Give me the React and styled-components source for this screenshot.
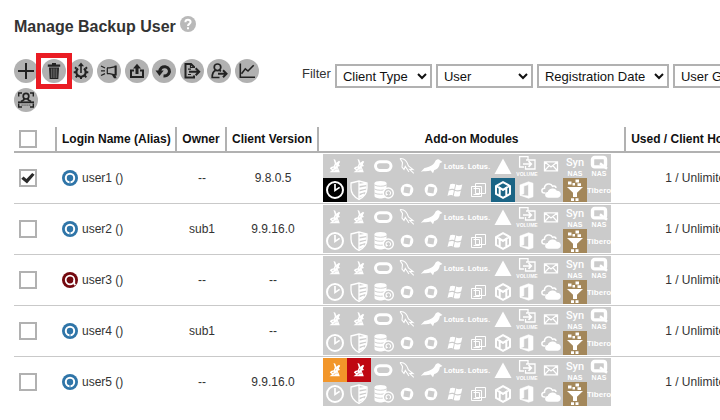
import React, { Fragment, useState } from "react";
import styled, { createGlobalStyle } from "styled-components";

const GlobalStyle = createGlobalStyle`
  * { box-sizing: border-box; }
  body {
    margin: 0;
    background: #fff;
    color: #333;
    font-family: "Liberation Sans", Arial, sans-serif;
    font-size: 12px;
  }
`;

const Page = styled.main`
  padding: 16px 0 0 14px;
  overflow: hidden;
`;

const TitleBar = styled.header`
  display: flex;
  gap: 4px;
  height: 22px;
`;

const Title = styled.h1`
  margin: 0;
  font-size: 16px;
  line-height: 22px;
  color: #333;
`;

const HelpLink = styled.a`
  width: 16px;
  height: 16px;
  svg { display: block; }
`;

const Controls = styled.section`
  display: flex;
  gap: 24px;
  margin-top: 21px;
`;

const Toolbar = styled.div`
  flex: 0 0 264px;
  font-size: 13px;
  line-height: 29px;
`;

const ToolButton = styled.button`
  position: relative;
  display: inline-block;
  vertical-align: top;
  width: 24px;
  height: 24px;
  padding: 0;
  border: 0;
  border-radius: 50%;
  background: #b1b1b1;
  color: #222;
  line-height: 0;
  z-index: ${(p) => (p.$marked ? 1 : 0)};
  &::after {
    content: "";
    display: ${(p) => (p.$marked ? "block" : "none")};
    position: absolute;
    inset: -6px;
    border: 5px solid #ea1c24;
  }
`;

const Filters = styled.div`
  display: flex;
  align-items: flex-start;
  gap: 4px;
  padding-top: 5px;
  font-size: 13px;
`;

const FilterLabel = styled.span`
  line-height: 20px;
`;

const Select = styled.select`
  flex: none;
  width: ${(p) => p.$width}px;
  height: 24px;
  padding: 0 2px;
  border: 2px solid #b1b1b1;
  border-radius: 0;
  background-color: #fff;
  color: #111;
  font: 13px "Liberation Sans", Arial, sans-serif;
`;

const Table = styled.table`
  table-layout: fixed;
  width: 100%;
  min-width: 763px;
  margin-top: 10px;
  border-collapse: separate;
  border-spacing: 0;
`;

const Col = styled.col`
  width: ${(p) => (p.$width ? `${p.$width}px` : "auto")};
`;

const HeadCell = styled.th`
  height: 26px;
  padding: 0 0 0 ${(p) => (p.$left ? 5 : 0)}px;
  border-bottom: 2px solid #b1b1b1;
  border-right: 2px solid #b1b1b1;
  color: #111;
  text-align: ${(p) => (p.$left ? "left" : "center")};
  white-space: nowrap;
  &:last-child { border-right: 0; }
`;

const Row = styled.tr`
  &:last-child td { border-bottom-color: transparent; }
`;

const Cell = styled.td`
  height: 51px;
  padding: 1px 0 1px ${(p) => p.$indent || 0}px;
  border-bottom: 1px solid #c9c9c9;
  text-align: ${(p) => (p.$indent ? "left" : "center")};
  white-space: nowrap;
  &:last-child { padding-right: 6px; }
`;

const Tick = styled.input`
  appearance: none;
  display: block;
  width: 18px;
  height: 18px;
  margin: 0 0 0 5px;
  border: 2px solid #b1b1b1;
  background: #fff;
  &:checked::before {
    content: "";
    display: block;
    width: 14px;
    height: 14px;
    background: #2b2b2b;
    clip-path: polygon(2% 56%, 18% 40%, 39% 58%, 80% 14%, 97% 27%, 43% 90%);
  }
`;

const UserLink = styled.a`
  display: flex;
  align-items: center;
  gap: 4px;
  color: inherit;
  text-decoration: none;
`;

const Modules = styled.div`
  display: grid;
  grid-template-columns: repeat(12, 24px);
  grid-auto-rows: 24px;
`;

const Module = styled.span`
  --tile: ${(p) => p.$color || "#cbcbcb"};
  background: var(--tile);
  color: #fff;
  line-height: 0;
`;

const Icon = ({ children, size = 24, width = 2 }) => (
  <svg
    width={size}
    height={size}
    viewBox={`0 0 ${size} ${size}`}
    fill="none"
    stroke="currentColor"
    strokeWidth={width}
    aria-hidden="true"
  >
    {children}
  </svg>
);

const WordText = styled.text`
  font-family: ${(p) => p.$face || '"Liberation Sans"'}, Arial, sans-serif;
  font-size: ${(p) => p.$size}px;
  font-weight: ${(p) => p.$weight || 700};
  text-anchor: middle;
  fill: currentColor;
  stroke: none;
`;

const Word = ({ y, size, weight, face, children }) => (
  <WordText x="12" y={y} $size={size} $weight={weight} $face={face}>
    {children}
  </WordText>
);

const tools = [
  ["Add", <Icon width={2}><path d="M4 12H20M12 4V20" /></Icon>],
  [
    "Delete",
    <Icon width={1}>
      <path d="M5.8 5.5H18.2V7.7H5.8zM10 4H14V5.5H10z" fill="currentColor" stroke="none" />
      <path d="M7 8.5H17L16.3 20H7.7z" fill="currentColor" stroke="none" />
      <path d="M9.4 9.5V19M11.2 9.5V19M12.9 9.5V19M14.7 9.5V19" stroke="#b1b1b1" strokeWidth=".5" />
    </Icon>,
  ],
  [
    "Update settings",
    <Icon width={2}>
      <path d="M9 9.5A4.7 4.7 0 1 0 15 9.5" strokeWidth="2.2" />
      <path d="M7.5 9.7L6 8.2M7 13.2H4.7M8.3 16.5L6.7 18.3M12 17.8V20M15.7 16.5L17.3 18.3M17 13.2H19.3M16.5 9.7L18 8.2" />
      <path d="M12 14V6" strokeWidth="1.6" />
      <path d="M9 7.3L12 3.5L15 7.3z" fill="currentColor" stroke="none" />
    </Icon>,
  ],
  [
    "Broadcast",
    <Icon width={1.2}>
      <path d="M4 7L8 9M4 11.8H8M4 16.5L8 14.6" />
      <path d="M10.3 9V14.7M10 8.8H12.5L18.5 7.6M10 14.7H12.5L18 15.8" />
      <path d="M17.6 6.5H19.7V16.5H17.6z" fill="currentColor" stroke="none" />
      <path d="M14.5 15.2H18L19.6 19.2H17z" fill="currentColor" stroke="none" />
    </Icon>,
  ],
  [
    "Upload",
    <Icon width={2}>
      <path d="M9 11.5H6V18H18V11.5H15" />
      <path d="M12 15V8" strokeWidth="3" />
      <path d="M8 9.5L12 4.8L16 9.5z" fill="currentColor" stroke="none" />
    </Icon>,
  ],
  [
    "Restore",
    <Icon width={3}>
      <path d="M7.7 12.8C8 9 10.5 7.3 13.3 7.7C17 8.2 18.5 12 16.6 14.8C15.6 16.4 13.8 17.2 11.5 17.1" />
      <path d="M3.5 11.5H11.7L7.5 17z" fill="currentColor" stroke="none" />
    </Icon>,
  ],
  [
    "Export file",
    <Icon width={2}>
      <path d="M14 9V8L11 5H5.5V18.5H14V16.5" />
      <path d="M10.5 5V8.5H14M8 10.2H11M8 15.5H11" strokeWidth="1.2" />
      <path d="M9 12.8H19M15.7 9.3L19.2 12.8L15.7 16.3" />
    </Icon>,
  ],
  [
    "Move user",
    <Icon width={1.7}>
      <circle cx="10.5" cy="8.3" r="3.3" />
      <path d="M8.5 11.4C6.5 12.3 5.2 14.5 5.2 18.5H12.5M12.2 11.3L14 12.2" />
      <path d="M11 14.7H19.3M16 11.2L19.5 14.7L16 18.2" strokeWidth="2" />
    </Icon>,
  ],
  [
    "Report",
    <Icon width={1.6}>
      <path d="M5.3 4.5V18.3H20" />
      <path d="M6.5 14.7L10.3 9.8L13 12L18.7 6.2" />
    </Icon>,
  ],
  [
    "Identify user",
    <Icon width={1.4}>
      <path d="M4.7 8.5V5H8M16 5H19.3V8.5M4.7 15.5V19H8M16 19H19.3V15.5" />
      <circle cx="12" cy="8.2" r="2.8" strokeWidth="1.7" />
      <path d="M10.2 10.3L9.7 12L7 13.6M13.8 10.3L14.3 12L17 13.6" strokeWidth="1.7" />
      <path d="M4 14.3H20" strokeWidth="1.8" />
      <path d="M7.5 17.2H16.5" strokeWidth="1.7" strokeDasharray="1.3 .6" stroke="#777" />
    </Icon>,
  ],
];

const rabbit = (
  <Icon width={1.7}>
    <path
      d="M10.5 5L12.3 5.8L13.3 8.8L16 6.8L17.2 7.8L15.8 10.3L17 12L14.6 12.8L16 16L16.8 18.3H6.5L9 16.3L6.8 14.5L8 13L10.7 12.2L11.8 9.5z"
      fill="currentColor"
      stroke="none"
    />
    <path d="M9 14.7L11 14M12 12.2L13.3 11.4M10.6 16.7L12.6 15.6M14 14.6V15.9" stroke="var(--tile)" strokeOpacity=".6" strokeWidth="1" />
  </Icon>
);

const chip = (
  <Icon>
    <circle cx="12" cy="12" r="6.3" fill="currentColor" stroke="none" />
    <path d="M9.4 8.4L15.6 9.5L14.5 15.6L8.4 14.5z" fill="var(--tile)" stroke="none" />
  </Icon>
);

const lotus = <Icon><Word y={15} size={8} face="Roboto">Lotus.</Word></Icon>;

const moduleIcons = [
  rabbit,
  rabbit,
  <Icon width={3}><rect x="4.5" y="7.8" width="15.5" height="8.6" rx="4.3" /></Icon>,
  <Icon width={1.1}>
    <path d="M5 4.5C9 4 12 7 13.5 12L18 15.5L14.7 15.3L18.8 19.3M5 4.5L7.5 8.5L7 13L9 15.5L10.3 12.5L14 18" />
  </Icon>,
  <Icon width={1}>
    <path
      d="M1.8 17.7L5.5 14C9 13.5 14.5 11.5 16 7.8C16.8 5.2 19.5 4.5 21 6.3L23.5 8L20.8 9.2C20.3 13.5 18 15.2 15.3 16L14 19.3L11.7 16.5C8.5 17.7 5 16.7 1.8 17.7z"
      fill="currentColor"
      stroke="none"
    />
  </Icon>,
  lotus,
  lotus,
  <Icon><path d="M12 4.5L20.5 20H3.5z" fill="currentColor" stroke="none" /></Icon>,
  <Icon width={1.3}>
    <path d="M9 13H4.6V2.6H13V6M10.5 12V15H20V6H11" />
    <path d="M8 10H16M13.5 7.2L16.3 10L13.5 12.8" strokeWidth="1.7" />
    <Word y={22} size={5}>VOLUME</Word>
  </Icon>,
  <Icon width={1.3}>
    <path d="M5.5 7.8H18.5V16.8H5.5zM5.5 7.8L12 13L18.5 7.8M5.5 16.8L10.2 11.6M18.5 16.8L13.8 11.6" />
  </Icon>,
  <Icon>
    <Word y={12} size={11} weight={500} face="Roboto">Syn</Word>
    <Word y={22} size={7}>NAS</Word>
  </Icon>,
  <Icon width={3.4}>
    <rect x="5.5" y="3.5" width="13" height="9.4" rx="2.2" />
    <path d="M13 9.3L20 14.8" strokeWidth="2.4" />
    <Word y={22} size={7}>NAS</Word>
  </Icon>,
  <Icon width={2}>
    <circle cx="12" cy="12" r="8" />
    <path d="M12 6V12.4L16.6 9.4" strokeWidth="1.7" />
  </Icon>,
  <Icon width={1.3}>
    <path d="M4 5L12 3L20 5V10C20 16 17 19 12 21.5C7 19 4 16 4 10z" />
    <path d="M12 6.8L19.5 5.8M12 10.8L19.5 9.4M12 14.8L19 12.8M12 19L17 16.5" strokeWidth="2.2" />
    <path d="M12 3V21.5" />
  </Icon>,
  <Icon width={1.4}>
    <path d="M3.5 5V18C3.5 21.3 15.5 21.3 15.5 18V5" fill="currentColor" stroke="none" />
    <ellipse cx="9.5" cy="5" rx="6" ry="2" fill="currentColor" stroke="none" />
    <path d="M3.5 7C6 8.7 13 8.7 15.5 7M3.5 11C6 12.7 13 12.7 15.5 11M3.5 15C6 16.7 13 16.7 15.5 15" stroke="var(--tile)" strokeWidth=".9" />
    <circle cx="17.3" cy="15" r="5" fill="var(--tile)" />
    <path d="M15.6 16.6A2.3 2.3 0 1 1 18.5 17" strokeWidth="1.1" />
    <path d="M14.6 17.8L15 14.9L17.3 16.8z" fill="currentColor" stroke="none" />
  </Icon>,
  chip,
  chip,
  <Icon>
    <path
      d="M7.2 6.3C9 5.4 10.6 5.6 12.3 6.3L11.2 11.3C9.4 10.6 7.8 10.7 6 11.6zM13.2 6.6C15.2 7.5 17.2 7.4 19.3 6.4L18.1 11.6C16 12.6 14 12.5 12 11.7zM5.8 12.6C7.5 11.8 9.2 11.7 11 12.4L9.8 17.5C8 16.8 6.3 17 4.5 17.9zM11.8 12.8C13.7 13.6 15.8 13.7 17.8 12.7L16.7 17.9C14.8 18.8 12.8 18.7 10.7 17.9z"
      fill="currentColor"
      stroke="none"
    />
  </Icon>,
  <Icon width={1}>
    <path d="M4.5 8.5H14.5V18.5H4.5zM8.5 5.5H18.5V15.5H8.5zM6.5 10.5H12.5V16.5H6.5" />
  </Icon>,
  <Icon width={2}>
    <path d="M12 4.2L19 8V16L12 19.8L5 16V8z" />
    <path d="M8.7 17.5V9.8L12 11.8L15.3 9.8V17.5" />
    <path d="M5 8L12 11.8L19 8" strokeWidth="1.5" />
  </Icon>,
  <Icon>
    <path
      d="M5 7L13.5 3.8L18 5.2V18.8L13.5 20.2L5 17.2L13.5 18V6.6L8.8 8V15.7L5 17.2z"
      fill="currentColor"
      stroke="currentColor"
      strokeWidth=".6"
    />
  </Icon>,
  <Icon width={1.5}>
    <path d="M6.5 15H5.5C2 15 2 10.5 5.5 10.3C5.5 5.5 12 4.5 13.5 8.3C15.5 7.4 17 8.5 17 10" />
    <path d="M9.5 19C6 19 6 14.6 9.5 14.4C10 10.5 16 10 17.2 13.5C21.8 13 22.2 18.6 18.6 19z" fill="currentColor" />
  </Icon>,
  <Icon>
    <path d="M4 9H20L14 14.8V19H10V14.8z" fill="currentColor" stroke="none" />
    <path
      d="M5 3.5H8.5V6.5H5zM9.5 5H12V7.5H9.5zM12.5 1.5H16V4.5H12.5zM14.5 5.3H18V8H14.5zM8 20.3H11V23H8zM12.5 20.3H15.5V23H12.5z"
      fill="currentColor"
      stroke="none"
    />
  </Icon>,
  <Icon><Word y={15} size={8}>Tibero</Word></Icon>,
];

const moduleNames = [
  "Exchange database", "Exchange mail", "Oracle", "MySQL", "MariaDB", "Lotus Domino", "Lotus Notes",
  "Triangle", "Volume", "Mail", "Synology NAS", "QNAP NAS", "Continuous backup", "Shield",
  "Database", "Hyper-V", "Hyper-V guest", "Windows", "VMware", "Granular restore",
  "Office 365", "Cloud", "Deduplication", "Tibero",
];

const TAN = "#a3875a";

const users = [
  { name: "user1", owner: "--", version: "9.8.0.5", on: { 12: "#000", 19: "#1a6485", 22: TAN } },
  { name: "user2", owner: "sub1", version: "9.9.16.0", on: { 22: TAN } },
  { name: "user3", owner: "--", version: "--", acb: true, on: { 22: TAN } },
  { name: "user4", owner: "sub1", version: "--", on: { 22: TAN } },
  { name: "user5", owner: "--", version: "9.9.16.0", on: { 0: "#f2962a", 1: "#bf0711", 22: TAN } },
];

const ClientIcon = ({ acb }) =>
  acb ? (
    <Icon size={16} width={1.7}>
      <circle cx="8" cy="8" r="8" fill="#74090f" stroke="none" />
      <circle cx="8" cy="8" r="4.3" stroke="#fff" />
      <path d="M12.3 8V12L13.5 13" stroke="#fff" />
    </Icon>
  ) : (
    <Icon size={16} width={2}>
      <circle cx="8" cy="8" r="8" fill="#2f75a8" stroke="none" />
      <circle cx="8" cy="8" r="4.2" stroke="#fff" strokeWidth="2" />
      <path d="M8 9V13" stroke="#2f75a8" strokeWidth="1" />
    </Icon>
  );

const filters = [
  ["Client Type", 97],
  ["User", 97],
  ["Registration Date", 132],
  ["User Group", 97],
];

export default function App() {
  const [selected, setSelected] = useState({ user1: true });
  const toggle = (name) => setSelected((s) => ({ ...s, [name]: !s[name] }));
  const all = users.every((u) => selected[u.name]);
  const toggleAll = () =>
    setSelected(Object.fromEntries(users.map((u) => [u.name, !all])));

  return (
    <Page>
      <GlobalStyle />
      <TitleBar>
        <Title>Manage Backup User</Title>
        <HelpLink href="#help" aria-label="Help">
          <Icon size={16} width={2}>
            <circle cx="8" cy="8" r="8" fill="#b9b9b9" stroke="none" />
            <path d="M5.4 6.2C5.4 3 10.6 3 10.6 6.1C10.6 8 8 7.8 8 10" stroke="#fff" />
            <path d="M8 11.2V13.2" stroke="#fff" />
          </Icon>
        </HelpLink>
      </TitleBar>

      <Controls>
        <Toolbar role="toolbar" aria-label="User actions">
          {tools.map(([label, icon]) => (
            <Fragment key={label}>
              <ToolButton type="button" aria-label={label} $marked={label === "Delete"}>
                {icon}
              </ToolButton>{" "}
            </Fragment>
          ))}
        </Toolbar>
        <Filters role="group" aria-labelledby="filter-label">
          <FilterLabel id="filter-label">Filter</FilterLabel>
          {filters.map(([label, width]) => (
            <Select key={label} $width={width} aria-label={label}>
              <option>{label}</option>
            </Select>
          ))}
        </Filters>
      </Controls>

      <Table>
        <colgroup>
          <Col $width={43} />
          <Col $width={120} />
          <Col $width={50} />
          <Col $width={92} />
          <Col $width={307} />
          <Col />
        </colgroup>
        <thead>
          <tr>
            <HeadCell>
              <Tick type="checkbox" aria-label="Select all users" checked={all} onChange={toggleAll} />
            </HeadCell>
            <HeadCell $left>Login Name (Alias)</HeadCell>
            <HeadCell>Owner</HeadCell>
            <HeadCell>Client Version</HeadCell>
            <HeadCell>Add-on Modules</HeadCell>
            <HeadCell>Used / Client Host Quota</HeadCell>
          </tr>
        </thead>
        <tbody>
          {users.map((u) => (
            <Row key={u.name}>
              <Cell>
                <Tick
                  type="checkbox"
                  aria-label={`Select ${u.name}`}
                  checked={!!selected[u.name]}
                  onChange={() => toggle(u.name)}
                />
              </Cell>
              <Cell $indent={5}>
                <UserLink href={`#${u.name}`}>
                  <ClientIcon acb={u.acb} />
                  {u.name} ()
                </UserLink>
              </Cell>
              <Cell>{u.owner}</Cell>
              <Cell>{u.version}</Cell>
              <Cell $indent={4}>
                <Modules>
                  {moduleIcons.map((icon, i) => (
                    <Module key={i} $color={u.on[i]} title={moduleNames[i]}>
                      {icon}
                    </Module>
                  ))}
                </Modules>
              </Cell>
              <Cell>1 / Unlimited</Cell>
            </Row>
          ))}
        </tbody>
      </Table>
    </Page>
  );
}
